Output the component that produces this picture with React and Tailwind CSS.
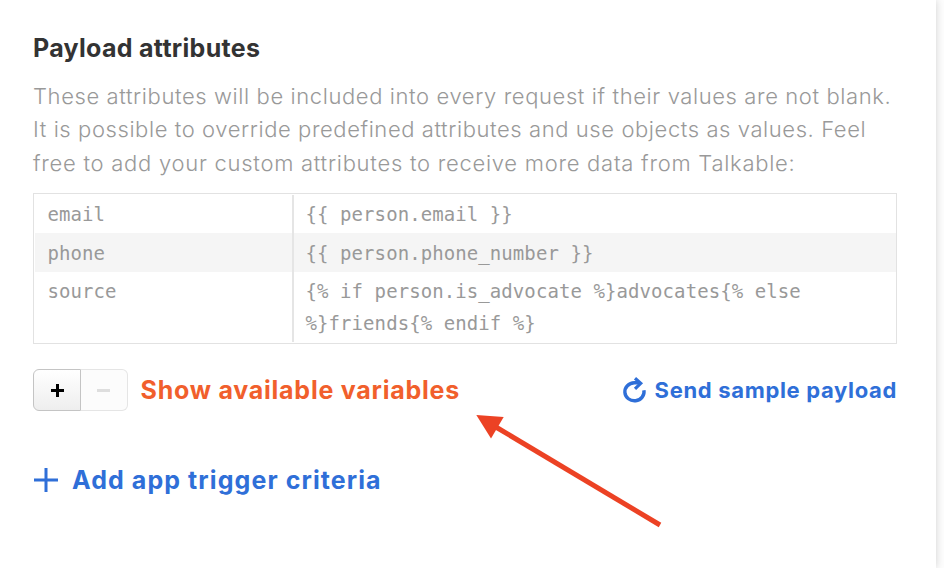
const lines = [
  { text: "These attributes will be included into every request if their values are not blank.", track: "tracking-[0.6px]" },
  { text: "It is possible to override predefined attributes and use objects as values. Feel", track: "tracking-[0.58px]" },
  { text: "free to add your custom attributes to receive more data from Talkable:", track: "tracking-[0.73px]" },
];

function AttributeRow({ name, children, className }) {
  return (
    <div className={`flex ${className}`}>
      <div className="w-[259px] shrink-0 border-r-2 border-[#e5e5e5] pl-[12.5px]">{name}</div>
      <div className="pl-[11.5px] whitespace-nowrap">{children}</div>
    </div>
  );
}

export default function App() {
  return (
    <div className="flex h-[568px] w-[944px] overflow-hidden bg-[#fdfdfd] font-['Inter',sans-serif]">
      <main className="relative h-full w-[936px] shrink-0 bg-white pl-[33px] shadow-[0_0_8px_rgba(0,0,0,0.18)]">
        <h1 className="pt-[32px] text-[25px] leading-8 font-bold tracking-[0.3px] whitespace-nowrap text-[#333]">
          <span>Payload attributes</span>
        </h1>
        <p className="mt-[16px] text-[22px] leading-[33.4px] font-light text-[#999]">
          {lines.map((line) => (
            <span key={line.text} className={`block whitespace-nowrap ${line.track}`}>{line.text}</span>
          ))}
        </p>
        <section className="mt-[12.3px] h-[151px] w-[864px] border border-[#e2e2e2] py-px pl-px font-['DejaVu_Sans_Mono',monospace] text-[19px] leading-[32px] tracking-[0.08px] text-[#999]">
          <AttributeRow name="email" className="h-[38px] [&>div]:pt-[3px]">{"{{ person.email }}"}</AttributeRow>
          <AttributeRow name="phone" className="h-[39px] bg-[#f5f5f5] [&>div]:pt-[4px]">{"{{ person.phone_number }}"}</AttributeRow>
          <AttributeRow name="source" className="h-[70px] [&>div]:pt-[3px]">
            {"{% if person.is_advocate %}advocates{% else"}
            <br />
            {"%}friends{% endif %}"}
          </AttributeRow>
        </section>
        <div className="mt-[25px] flex h-[42px] w-[864px] items-center">
          <div className="flex h-[42px] w-[95px] shrink-0">
            <button className="flex w-[48px] items-center justify-center rounded-l-[6px] border border-[#c4c4c4] bg-linear-to-b from-white to-[#eeeeee]">
              <svg className="mt-px" width="13" height="13" viewBox="0 0 13 13" fill="#000"><path d="M5 0h3v5h5v3H8v5H5V8H0V5h5z" /></svg>
            </button>
            <button className="flex w-[47px] items-center justify-center rounded-r-[6px] border border-l-0 border-[#e5e5e5] bg-[#fcfcfc]">
              <span className="mt-px mr-px h-[3px] w-[13px] bg-[#dedede]" />
            </button>
          </div>
          <a className="ml-[12.5px] text-[25px] leading-8 font-bold tracking-[0.76px] whitespace-nowrap text-[#f15f2c]">Show available variables</a>
          <a className="ml-auto flex items-center whitespace-nowrap text-[#2f6fd8]">
            <svg className="mr-[7.500px]" width="25" height="26" viewBox="0 0 25 26" fill="none" stroke="currentColor" strokeWidth="3.4">
              <path d="M21.900 13.200A9.600 9 0 1 1 12.300 5.800H18" />
              <path d="M13 1.300 18.700 6.300 13 11.800" strokeWidth="3.2" />
            </svg>
            <span className="text-[22px] leading-8 font-bold tracking-[0.67px]">Send sample payload</span>
          </a>
        </div>
        <a className="mt-[53px] flex items-center whitespace-nowrap text-[#2f6fd8]">
          <svg className="mr-[14px] ml-px" width="24" height="24" viewBox="0 0 24 24" fill="none" stroke="currentColor" strokeWidth="3"><path d="M12 0v24M0 12h24" /></svg>
          <span className="text-[25px] leading-8 font-bold tracking-[1.08px]">Add app trigger criteria</span>
        </a>
        <svg className="pointer-events-none absolute top-[410px] left-[470px]" width="200" height="120" viewBox="470 410 200 120">
          <path d="M476.300 415 503.700 417 491 438.500z" fill="#ec4224" />
          <path d="M495 426.500 660 525" stroke="#ec4224" strokeWidth="5" />
        </svg>
      </main>
    </div>
  );
}
